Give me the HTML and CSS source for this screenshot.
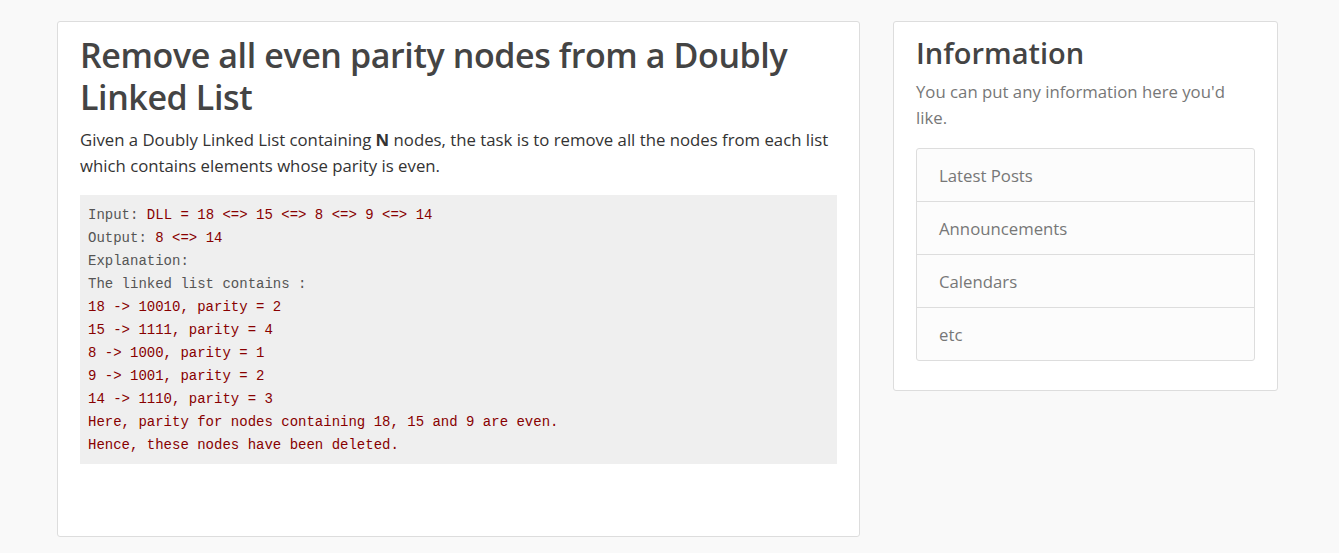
FILE: index.html
```html
<!DOCTYPE html>
<html lang="en">
<head>
<meta charset="utf-8">
<title>Remove all even parity nodes from a Doubly Linked List</title>
<link rel="stylesheet" href="styles.css">
</head>
<body>
<div class="page">
  <main class="card main">
    <h1 class="title">Remove all even parity nodes from a Doubly Linked List</h1>
    <p class="lead">Given a Doubly Linked List containing <b>N</b> nodes, the task is to remove all the nodes from each list which contains elements whose parity is even.</p>
    <pre class="code"><span class="k">Input:</span> <span class="v">DLL = 18 &lt;=&gt; 15 &lt;=&gt; 8 &lt;=&gt; 9 &lt;=&gt; 14</span>
<span class="k">Output:</span> <span class="v">8 &lt;=&gt; 14</span>
<span class="k">Explanation:</span>
<span class="k">The linked list contains :</span>
<span class="v">18 -&gt; 10010, parity = 2</span>
<span class="v">15 -&gt; 1111, parity = 4</span>
<span class="v">8 -&gt; 1000, parity = 1</span>
<span class="v">9 -&gt; 1001, parity = 2</span>
<span class="v">14 -&gt; 1110, parity = 3</span>
<span class="v">Here, parity for nodes containing 18, 15 and 9 are even.</span>
<span class="v">Hence, these nodes have been deleted.</span></pre>
  </main>
  <aside class="card side">
    <h2 class="side-title">Information</h2>
    <p class="side-text">You can put any information here you'd like.</p>
    <ul class="list">
      <li class="list-item">Latest Posts</li>
      <li class="list-item">Announcements</li>
      <li class="list-item">Calendars</li>
      <li class="list-item">etc</li>
    </ul>
  </aside>
</div>
</body>
</html>
```
FILE: styles.css
```css
html, body {
  margin: 0;
  padding: 0;
}
body {
  background: #f9f9f9;
  font-family: "Open Sans", "Noto Sans", sans-serif;
  color: #333;
}
.page {
  display: flex;
  align-items: flex-start;
  gap: 33px;
  padding: 21px 0 0 57px;
}
.card {
  background: #fff;
  border: 1px solid #ddd;
  border-radius: 3px;
  box-sizing: border-box;
}
.main {
  width: 803px;
  height: 516px;
  padding: 12px 22px 20px 22px;
}
.title {
  margin: 0;
  font-size: 34px;
  line-height: 42px;
  font-weight: 600;
  color: #444;
  letter-spacing: -0.4px;
}
.lead {
  margin: 9px 0 16px;
  font-size: 16.75px;
  line-height: 26px;
  color: #333;
}
.lead b {
  font-weight: 700;
  line-height: 1;
}
.code {
  margin: 0;
  background: #efefef;
  padding: 9px 8px 7px 8px;
  font-family: "Liberation Mono", "DejaVu Sans Mono", monospace;
  font-size: 14px;
  line-height: 23px;
  white-space: pre;
}
.k {
  color: #555;
}
.v {
  color: #800;
}
.side {
  width: 385px;
  padding: 12px 22px 29px 22px;
}
.side-title {
  margin: 0;
  font-size: 29px;
  line-height: 38px;
  font-weight: 600;
  color: #444;
}
.side-text {
  margin: 7px 0 17px;
  font-size: 16.75px;
  line-height: 26px;
  color: #777;
}
.list {
  list-style: none;
  margin: 0;
  padding: 0;
  border: 1px solid #ddd;
  border-radius: 3px;
  background: #fcfcfc;
}
.list-item {
  padding: 0 22px;
  height: 52px;
  display: flex;
  align-items: center;
  font-size: 16.75px;
  color: #777;
  border-top: 1px solid #ddd;
}
.list-item:first-child {
  border-top: none;
}
```
